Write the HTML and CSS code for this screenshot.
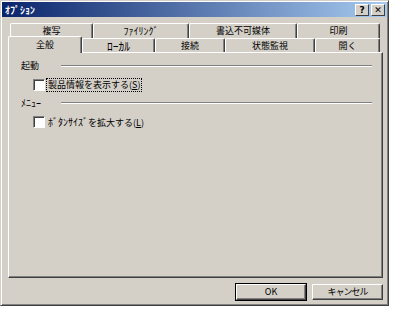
FILE: index.html
```html
<!DOCTYPE html>
<html lang="ja">
<head>
    <meta charset="UTF-8">
    <title>ｵﾌﾟｼｮﾝ</title>
    <link rel="stylesheet" href="styles.css">
</head>
<body>

<div class="dialog">
    <div class="titlebar">
        <span class="title hk">ｵﾌﾟｼｮﾝ</span>
        <div class="caption-btns">
            <span class="cbtn">?</span>
            <span class="cbtn">✕</span>
        </div>
    </div>

    <div class="tabstrip">
        <div class="tabrow back">
            <div class="tab t-copy">複写</div>
            <div class="tab t-filing"><span class="hk">ﾌｧｲﾘﾝｸﾞ</span></div>
            <div class="tab t-ro">書込不可媒体</div>
            <div class="tab t-print">印刷</div>
        </div>
        <div class="tabrow front">
            <div class="tab t-general selected">全般</div>
            <div class="tab t-local"><span class="hk wide">ﾛｰｶﾙ</span></div>
            <div class="tab t-conn">接続</div>
            <div class="tab t-watch">状態監視</div>
            <div class="tab t-open">開く</div>
        </div>
    </div>

    <div class="panel">
        <div class="group">
            <span class="glabel"><span>起動</span></span>
            <span class="gline"></span>
        </div>
        <div class="check">
            <span class="box"></span>
            <span class="ctext focus">製品情報を表示する(<u>S</u>)</span>
        </div>

        <div class="group">
            <span class="glabel"><span class="hk">ﾒﾆｭｰ</span></span>
            <span class="gline"></span>
        </div>
        <div class="check">
            <span class="box"></span>
            <span class="ctext"><span class="hk">ﾎﾞﾀﾝｻｲｽﾞ</span>を拡大する(<u>L</u>)</span>
        </div>
    </div>

    <div class="buttons">
        <div class="btn default">OK</div>
        <div class="btn"><span class="tight">キャンセル</span></div>
    </div>
</div>

</body>
</html>
```

FILE: styles.css
```css
body {
    margin: 0;
    background: #ffffff;
    font-family: "Noto Sans CJK JP", "DejaVu Sans", sans-serif;
    font-size: 9px;
    color: #000000;
}

/* half-width kana read a little larger in the original */
.hk {
    font-size: 10px;
}
.hk.wide {
    font-size: 11.5px;
}
.tight {
    letter-spacing: -1px;
}

.dialog {
    width: 389px;
    height: 306px;
    box-sizing: border-box;
    background: #d4d0c8;
    border-top: 1px solid #d4d0c8;
    border-left: 1px solid #d4d0c8;
    border-right: 1px solid #404040;
    border-bottom: 1px solid #404040;
    box-shadow: inset 1px 1px #ffffff, inset -1px -1px #808080;
    padding: 1px 5px 0 1px;
    display: flex;
    flex-direction: column;
}

.titlebar {
    height: 15px;
    background: linear-gradient(to right, #0a246a, #a6caf0);
    display: flex;
    align-items: center;
    justify-content: space-between;
    padding: 0 2px 0 3px;
    margin-right: -4px;
}
.title {
    color: #ffffff;
    font-weight: bold;
    line-height: 15px;
}
.caption-btns {
    display: flex;
    gap: 2px;
}
.cbtn {
    width: 14px;
    height: 12px;
    box-sizing: border-box;
    background: #d4d0c8;
    border-top: 1px solid #ffffff;
    border-left: 1px solid #ffffff;
    border-right: 1px solid #404040;
    border-bottom: 1px solid #404040;
    font-family: "DejaVu Sans", sans-serif;
    font-size: 9px;
    font-weight: bold;
    line-height: 10px;
    text-align: center;
}

/* tabs */
.tabstrip {
    margin-top: 6px;
    margin-left: 6px;
}
.tabrow {
    display: flex;
    padding-left: 2px;
    height: 15px;
}
.tabrow.front {
    height: 14px;
}
.tab {
    box-sizing: border-box;
    border-top: 1px solid #ffffff;
    border-left: 1px solid #ffffff;
    border-right: 1px solid #404040;
    box-shadow: inset -1px 0 #808080;
    border-radius: 2px 2px 0 0;
    text-align: center;
    line-height: 14px;
    background: #d4d0c8;
}
.tab.selected {
    position: relative;
    z-index: 1;
    margin: -2px 0 -1px -2px;
    height: 17px;
    line-height: 15px;
}

.t-copy { width: 83px; }
.t-filing { width: 96px; }
.t-ro { width: 108px; }
.t-print { width: 83px; }
.t-general { width: 74px; }
.t-local { width: 73px; }
.t-conn { width: 70px; }
.t-watch { width: 90px; }
.t-open { width: 65px; }

.panel {
    margin-left: 6px;
    height: 226px;
    box-sizing: border-box;
    border-top: 1px solid #ffffff;
    border-left: 1px solid #ffffff;
    border-right: 1px solid #404040;
    border-bottom: 1px solid #404040;
    box-shadow: inset -1px -1px #808080;
    padding: 7px 10px 0 12px;
}

.group {
    display: flex;
    align-items: center;
    height: 12px;
}
.glabel {
    width: 40px;
    line-height: 12px;
}
.gline {
    flex: 1;
    height: 0;
    border-top: 1px solid #808080;
    border-bottom: 1px solid #ffffff;
}

.check {
    display: flex;
    align-items: center;
    padding-left: 12px;
    margin: 6px 0 5px;
    height: 14px;
}
.box {
    width: 12px;
    height: 12px;
    box-sizing: border-box;
    background: #ffffff;
    border-top: 1px solid #808080;
    border-left: 1px solid #808080;
    border-right: 1px solid #ffffff;
    border-bottom: 1px solid #ffffff;
    box-shadow: inset 1px 1px #404040;
    margin-right: 1px;
}
.ctext {
    padding: 0 1px;
    line-height: 12px;
    border: 1px dotted transparent;
}
.ctext.focus {
    border-color: #000000;
}

.buttons {
    display: flex;
    justify-content: flex-end;
    gap: 6px;
    margin-top: 6px;
}
.btn {
    width: 71px;
    height: 16px;
    box-sizing: border-box;
    border-top: 1px solid #ffffff;
    border-left: 1px solid #ffffff;
    border-right: 1px solid #404040;
    border-bottom: 1px solid #404040;
    box-shadow: inset -1px -1px #808080;
    text-align: center;
    line-height: 14px;
}
.btn.default {
    outline: 1px solid #000000;
    outline-offset: 0;
    width: 70px;
}
```
